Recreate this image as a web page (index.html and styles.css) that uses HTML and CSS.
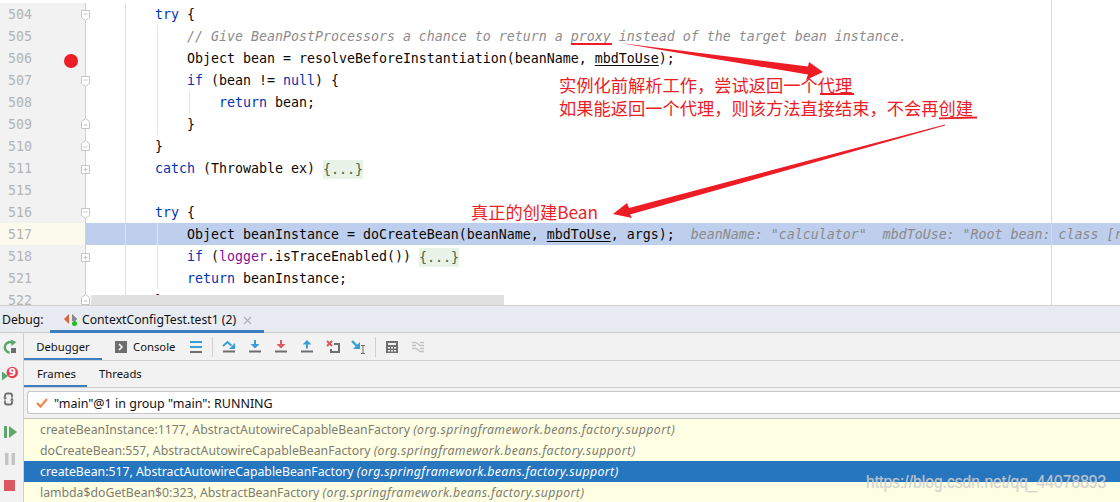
FILE: index.html
```html
<!DOCTYPE html>
<html lang="en">
<head>
<meta charset="utf-8">
<title>Debug</title>
<link rel="stylesheet" href="styles.css">
</head>
<body>
<div class="page">
  <section class="editor">
    <div class="line"><div class="num">504</div><div class="fold"><svg class="mark" viewBox="0 0 9 11"><path d="M.5.5h8v7l-4 3-4-3z"/><path d="M2.5 4h4"/></svg></div><div class="code"><span class="k">try</span> {</div></div>
    <div class="line"><div class="num">505</div><div class="fold"></div><div class="code g1"><span class="c">    // Give BeanPostProcessors a chance to return a proxy instead of the target bean instance.</span></div></div>
    <div class="line"><div class="num">506<span class="bp"></span></div><div class="fold"></div><div class="code g1">    Object bean = resolveBeforeInstantiation(beanName, <u>mbdToUse</u>);</div></div>
    <div class="line"><div class="num">507</div><div class="fold"><svg class="mark" viewBox="0 0 9 11"><path d="M.5.5h8v7l-4 3-4-3z"/><path d="M2.5 4h4"/></svg></div><div class="code g1">    <span class="k">if</span> (bean != <span class="k">null</span>) {</div></div>
    <div class="line"><div class="num">508</div><div class="fold"></div><div class="code g1 g2">        <span class="k">return</span> bean;</div></div>
    <div class="line"><div class="num">509</div><div class="fold"><svg class="mark up" viewBox="0 0 9 11"><path d="M.5 10.500h8v-7l-4-3-4 3z"/><path d="M2.5 7h4"/></svg></div><div class="code g1">    }</div></div>
    <div class="line"><div class="num">510</div><div class="fold"><svg class="mark up" viewBox="0 0 9 11"><path d="M.5 10.500h8v-7l-4-3-4 3z"/><path d="M2.5 7h4"/></svg></div><div class="code">}</div></div>
    <div class="line"><div class="num">511</div><div class="fold"><svg class="mark sq" viewBox="0 0 9 9"><path d="M.5.5h8v8h-8z"/><path d="M2.5 4.500h4M4.500 2.500v4"/></svg></div><div class="code"><span class="k">catch</span> (Throwable ex) <span class="folded">{...}</span></div></div>
    <div class="line"><div class="num">515</div><div class="fold"></div><div class="code"></div></div>
    <div class="line"><div class="num">516</div><div class="fold"><svg class="mark" viewBox="0 0 9 11"><path d="M.5.5h8v7l-4 3-4-3z"/><path d="M2.5 4h4"/></svg></div><div class="code"><span class="k">try</span> {</div></div>
    <div class="line current"><div class="num">517</div><div class="fold"></div><div class="code g1">    Object beanInstance = doCreateBean(beanName, <u>mbdToUse</u>, args);  <span class="hint">beanName: "calculator"  mbdToUse: "Root bean: class [r</span></div></div>
    <div class="line"><div class="num">518</div><div class="fold"><svg class="mark sq" viewBox="0 0 9 9"><path d="M.5.5h8v8h-8z"/><path d="M2.5 4.500h4M4.500 2.500v4"/></svg></div><div class="code g1">    <span class="k">if</span> (<span class="f">logger</span>.isTraceEnabled()) <span class="folded">{...}</span></div></div>
    <div class="line"><div class="num">521</div><div class="fold"></div><div class="code g1">    <span class="k">return</span> beanInstance;</div></div>
    <div class="line"><div class="num">522</div><div class="fold"><svg class="mark up" viewBox="0 0 9 11"><path d="M.5 10.500h8v-7l-4-3-4 3z"/><path d="M2.5 7h4"/></svg></div><div class="code">}</div></div>
    <div class="margin-line"></div>
    <div class="hscroll"></div>
  </section>

  <header class="debug-bar">
    <span class="debug-label">Debug:</span>
    <div class="run-tab">
      <svg class="run-icon" viewBox="0 0 14 14"><path d="M5 1 0 6l5 5z" fill="#e0613a"/><path d="M8 1l5 5-2 2-3-3z" fill="#59a869"/><path d="M8 1v7h3l2-2z" fill="#8a8a8a"/><circle cx="10.5" cy="10.5" r="2.5" fill="#1fc11f"/></svg>
      <span>ContextConfigTest.test1 (2)</span>
      <svg class="close" viewBox="0 0 9 9"><path d="M1 1l7 7M8 1L1 8"/></svg>
    </div>
  </header>

  <div class="debug-body">
    <aside class="side">
      <div class="side-top">
        <svg viewBox="0 0 16 16"><path d="M11.500 4.500A5.200 5.200 0 1 0 7.500 13.500" fill="none" stroke="#59a869" stroke-width="2.400"/><path d="M8.500 .5l6 2.500-5 4z" fill="#59a869"/><rect x="9" y="9" width="5" height="5" fill="#6e6e6e"/></svg>
        <svg viewBox="0 0 16 16"><path d="M0 6.500l6 4.500-6 4.500z" fill="#59a869"/><circle cx="10.300" cy="7.500" r="5.700" fill="#e5404e"/><text x="10.300" y="11.200" class="nine">9</text></svg>
        <svg viewBox="0 0 16 16"><g fill="none" stroke="#6e6e6e" stroke-width="1.800"><path d="M3 6.500V4.500A2 2 0 0 1 5 2.500h3A2 2 0 0 1 10 4.500V6.500"/><path d="M3 9.500v2A2 2 0 0 0 5 13.500h3a2 2 0 0 0 2-2V9.500"/></g><path d="M1 6.500h4L3 9zM8 9.500h4l-2-3z" fill="#6e6e6e"/></svg>
      </div>
      <div class="side-bottom">
        <svg viewBox="0 0 16 16"><path d="M2 2h3v12H2z" fill="#59a869"/><path d="M7 2l8 6-8 6z" fill="#59a869"/></svg>
        <svg viewBox="0 0 16 16"><path d="M3 2h3.500v12H3zM9.500 2H13v12H9.500z" fill="#c4c4c4"/></svg>
        <svg viewBox="0 0 16 16"><path d="M2 3h11v11H2z" fill="#db5860"/></svg>
      </div>
    </aside>

    <main class="panel">
      <div class="toolbar">
        <div class="tab active-tab">Debugger</div>
        <div class="tab console-tab"><svg class="console-icon" viewBox="0 0 12 12"><path d="M0 0h12v12H0z" fill="#6e6e6e"/><path d="M4 3l3 3-3 3" fill="none" stroke="#fff" stroke-width="1.500"/></svg>Console</div>
        <svg class="tool menu" viewBox="0 0 12 12"><path d="M0 0h12v2H0zM0 5h12v2H0z" fill="#389fd6"/><path d="M0 10h12v2H0z" fill="#6e6e6e"/></svg>
        <span class="sep"></span>
        <div class="tools">
          <svg viewBox="0 0 14 14"><path d="M1 6l4.500-4 4 3.500" fill="none" stroke="#389fd6" stroke-width="2"/><path d="M13 3v6H7z" fill="#389fd6"/><path d="M1 10.500h12v2H1z" fill="#6e6e6e"/></svg>
          <svg viewBox="0 0 14 14"><path d="M6 0h2v4h3.500L7 8.500 2.500 4H6z" fill="#389fd6"/><path d="M1 10.500h12v2H1z" fill="#6e6e6e"/></svg>
          <svg viewBox="0 0 14 14"><path d="M6 0h2v4h3.500L7 8.500 2.500 4H6z" fill="#db5860"/><path d="M1 10.500h12v2H1z" fill="#6e6e6e"/></svg>
          <svg viewBox="0 0 14 14"><path d="M6 8.500h2v-4h3.500L7 0 2.500 4.500H6z" fill="#389fd6"/><path d="M1 10.500h12v2H1z" fill="#6e6e6e"/></svg>
          <svg viewBox="0 0 14 14"><path d="M1 1l5 5M6 1L1 6" stroke="#db5860" stroke-width="2"/><path d="M8 4h5v8H5V9" fill="none" stroke="#6e6e6e" stroke-width="2"/></svg>
          <svg viewBox="0 0 16 14"><path d="M1 1l5.500 5.500" stroke="#389fd6" stroke-width="2.400"/><path d="M9 2v7H2z" fill="#389fd6"/><path d="M10 5.500h4M10 13.500h4M12 5.500v8" stroke="#6e6e6e" fill="none"/></svg>
        </div>
        <span class="sep narrow"></span>
        <div class="tools second">
          <svg viewBox="0 0 12 12"><path fill-rule="evenodd" d="M0 0h12v12H0zM2 2v2h8V2zM2 6v1.500h2V6zM5 6v1.500h2V6zM8 6v1.500h2V6zM2 9v1.500h2V9zM5 9v1.500h2V9zM8 9v1.500h2V9z" fill="#6e6e6e"/></svg>
          <svg viewBox="0 0 12 12"><path d="M0 1.500h4l4 3h4M0 4.500h4M0 7.500h4l4 3h4M8 1.500h4M8 7.500h4" fill="none" stroke="#c4c4c4" stroke-width="1.500"/></svg>
        </div>
      </div>

      <div class="subtabs">
        <div class="subtab active-sub">Frames</div>
        <div class="subtab">Threads</div>
      </div>

      <div class="thread-wrap">
        <div class="thread">
          <svg class="check" viewBox="0 0 12 10"><path d="M1 5l3.500 3.500L11 1" fill="none" stroke="#ef8a5a" stroke-width="2.400"/></svg>
          <span>"main"@1 in group "main": RUNNING</span>
        </div>
      </div>

      <ul class="frames">
        <li>createBeanInstance:1177, AbstractAutowireCapableBeanFactory <i>(org.springframework.beans.factory.support)</i></li>
        <li>doCreateBean:557, AbstractAutowireCapableBeanFactory <i>(org.springframework.beans.factory.support)</i></li>
        <li class="selected">createBean:517, AbstractAutowireCapableBeanFactory <i>(org.springframework.beans.factory.support)</i></li>
        <li>lambda$doGetBean$0:323, AbstractBeanFactory <i>(org.springframework.beans.factory.support)</i></li>
      </ul>
    </main>
  </div>

  <svg class="ink" viewBox="0 0 1120 502">
    <g fill="#ee1c25" stroke="none">
      <path d="M620 43 L808 66.500 L809 62 L823 72 L806 80 L808 74.500 Z"/>
      <path d="M945 124.500 L629 208 L627 203 L613 214 L632 218 L630 214.500 L945 125.500 Z"/>
      <path d="M571 43h41v2h-41z"/>
      <path d="M820 93h34v2h-34z"/>
      <path d="M939 117.500l38-1v2l-38 .8z"/>
    </g>
  </svg>
  <div class="note note-a">实例化前解析工作，尝试返回一个代理<br>如果能返回一个代理，则该方法直接结束，不会再创建</div>
  <div class="note note-b">真正的创建Bean</div>
  <div class="watermark">https://blog.csdn.net/qq_44078893</div>
</div>
</body>
</html>
```
FILE: styles.css
```css
* { box-sizing: border-box; }
html, body { margin: 0; padding: 0; }
body { width: 1120px; height: 502px; overflow: hidden; background: #f2f2f2; }
.page { position: relative; width: 1120px; height: 502px; overflow: hidden; display: flex; flex-direction: column; font-family: "Noto Sans", "Liberation Sans", sans-serif; }

.editor { position: relative; height: 305px; flex: none; overflow: hidden; padding-top: 3px; background: #fff; }
.line { display: flex; height: 22px; flex: none; font: 13.29px/22px "DejaVu Sans Mono", monospace; color: #080808; }
.num { position: relative; width: 85px; flex: none; padding: 1px 0 0 8px; background: #f2f2f2; color: #b4b4b4; }
.bp { position: absolute; left: 64px; top: 7px; width: 14px; height: 14px; border-radius: 50%; background: #ee1c25; }
.fold { position: relative; width: 41px; flex: none; border-left: 1px solid #d0d0d0; border-right: 1px solid #e0e0e0; }
.mark { position: absolute; left: -5px; top: 7px; width: 9px; height: 11px; fill: #fff; stroke: #c6c6c6; stroke-width: 1; }
.mark.up { top: 5px; }
.mark.sq { top: 8px; height: 9px; }
.code { flex: 1; min-width: 0; padding: 1px 0 0 29px; white-space: pre; overflow: hidden; }
.g1 { background: linear-gradient(#e4e4e4, #e4e4e4) 31px 0 / 1px 100% no-repeat; }
.g2 { background: linear-gradient(#e4e4e4, #e4e4e4) 31px 0 / 1px 100% no-repeat, linear-gradient(#e4e4e4, #e4e4e4) 63px 0 / 1px 100% no-repeat; }
.k { color: #0033b3; }
.c { color: #8c8c8c; font-style: italic; }
.f { color: #871094; }
.folded { display: inline-block; height: 19px; line-height: 19px; margin-top: 2px; background: #e8f2e6; color: #3c6a46; vertical-align: top; }
.hint { color: #8a8a8a; font-style: italic; }
u { text-underline-offset: 2px; }
.current .num { background: #fcfaed; }
.current .fold { background: #bdcfed; }
.current .code { background-color: #bdcfed; }
.margin-line { position: absolute; left: 1051px; top: 0; bottom: 0; width: 1px; background: #d8d8d8; }
.hscroll { position: absolute; left: 91px; width: 413px; bottom: 0; height: 10px; background: #e0e0e0; }

.debug-bar { height: 28px; flex: none; display: flex; align-items: stretch; background: #e8ebf2; border-top: 1px solid #cfcfcf; border-bottom: 1px solid #c9c9c9; font-size: 12.2px; color: #111; }
.debug-label { padding: 5px 0 0 2px; width: 50px; flex: none; }
.run-tab { width: 214px; display: flex; align-items: flex-start; padding: 5px 0 0 14px; border-bottom: 3px solid #3d7ebf; height: 27px; }
.run-icon { width: 14px; height: 14px; margin: 2px 4px 0 0; flex: none; }
.close { width: 9px; height: 9px; margin: 5px 0 0 7px; stroke: #b0b0b0; stroke-width: 1.2; flex: none; }

.debug-body { flex: 1; min-height: 0; display: flex; }
.side { width: 24px; flex: none; display: flex; flex-direction: column; justify-content: space-between; border-right: 1px solid #cfcfcf; padding: 6px 0 9px 2px; background: #f2f2f2; }
.side svg { display: block; width: 16px; height: 16px; }
.side-top { display: flex; flex-direction: column; gap: 10px; }
.side-bottom { display: flex; flex-direction: column; gap: 10.5px; }
.nine { font: bold 10.5px "DejaVu Sans", sans-serif; fill: #fff; text-anchor: middle; }

.panel { flex: 1; min-width: 0; display: flex; flex-direction: column; }
.toolbar { height: 28px; flex: none; display: flex; align-items: center; border-bottom: 1px solid #d0d0d0; font-size: 11.3px; color: #111; }
.tab { height: 27px; display: flex; align-items: center; }
.active-tab { width: 78px; justify-content: center; border-bottom: 2px solid #3d7ebf; padding-top: 2px; }
.console-tab { margin-left: 13px; width: 75px; gap: 6px; }
.console-icon { width: 12px; height: 12px; }
.tool { flex: none; }
.menu { width: 12px; height: 12px; }
.sep { width: 1px; height: 20px; background: #d0d0d0; margin-left: 10px; flex: none; }
.sep.narrow { margin-left: 3px; }
.tools { display: flex; align-items: center; margin-left: 3px; }
.tools svg { width: 26px; height: 14px; }
.tools.second svg { height: 12px; }

.subtabs { height: 27px; flex: none; display: flex; border-bottom: 1px solid #d0d0d0; font-size: 11.3px; color: #111; }
.subtab { padding: 5px 13px 0; height: 26px; }
.active-sub { width: 63px; border-bottom: 2px solid #3d7ebf; }
.subtab + .subtab { padding-left: 12px; }

.thread-wrap { height: 31px; flex: none; padding: 3px 0 0 3px; border-bottom: 1px solid #c6c6c6; }
.thread { height: 23px; display: flex; align-items: center; gap: 6px; padding: 1px 0 0 8px; background: #fff; border: 1px solid #c6c6c6; border-right: 0; border-radius: 3px 0 0 3px; font-size: 12.5px; color: #111; }
.check { width: 12px; height: 10px; }

.frames { flex: 1; margin: 0; padding: 0; list-style: none; background: #ffffe4; font-size: 12.27px; color: #7d7d72; }
.frames li { height: 21px; line-height: 21px; padding-left: 16px; white-space: nowrap; }
.frames i { letter-spacing: .4px; }
.frames .selected { background: #2675bf; color: #fff; }

.ink { position: absolute; left: 0; top: 0; width: 1120px; height: 502px; pointer-events: none; }
.note { position: absolute; font-family: "Noto Sans CJK SC", sans-serif; font-size: 17.25px; line-height: 23px; color: #ee1c25; white-space: nowrap; }
.note-a { left: 559px; top: 73px; }
.note-b { left: 471px; top: 200px; }
.watermark { position: absolute; left: 866px; top: 471px; font: 17.6px/22px "Liberation Sans", sans-serif; color: rgba(205, 205, 205, .75); text-shadow: 0 0 1px rgba(205, 205, 205, .6); white-space: nowrap; transform: scaleX(.89); transform-origin: left center; }
```
